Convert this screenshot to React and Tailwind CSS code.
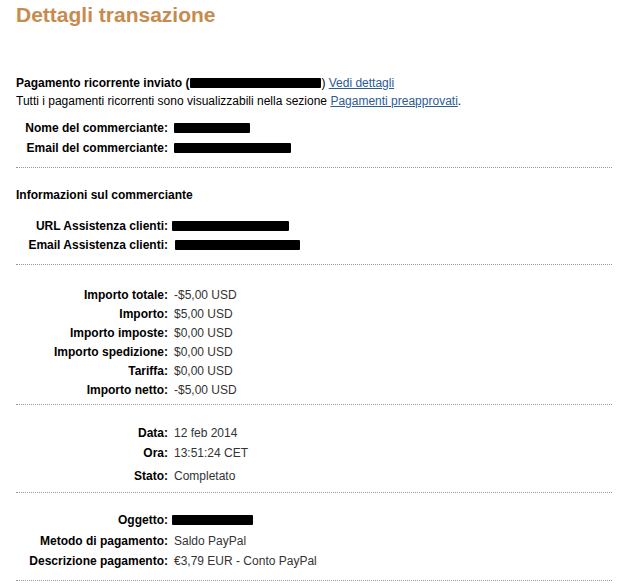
const rowsMerchant = [
  { label: 'Nome del commerciante:', bar: 76 },
  { label: 'Email del commerciante:', bar: 117 },
];

const rowsAmounts = [
  ['Importo totale:', '-$5,00 USD'],
  ['Importo:', '$5,00 USD'],
  ['Importo imposte:', '$0,00 USD'],
  ['Importo spedizione:', '$0,00 USD'],
  ['Tariffa:', '$0,00 USD'],
  ['Importo netto:', '-$5,00 USD'],
];

function Redacted({ w, className = '' }) {
  return <span className={`inline-block h-[10px] bg-black align-[-1px] rounded-[1px] ${className}`} style={{ width: w }} />;
}

function Row({ label, children, h = 'h-[19px]', className = '' }) {
  return (
    <div className={`flex items-center ${h} ${className}`}>
      <div className="w-[152px] shrink-0 text-right font-bold text-black">{label}</div>
      <div className="pl-[6px] text-[#333]">{children}</div>
    </div>
  );
}

function Divider() {
  return <div className="border-t border-dotted border-[#999]" />;
}

export default function App() {
  return (
    <div className="min-h-[588px] bg-white font-['Liberation_Sans',Arial,sans-serif] text-[12px] leading-[18px] text-black">
      <div className="w-[596px] ml-[16px]">
        <h1 className="pt-[2px] text-[21px] leading-[26px] font-bold text-[#c98a4e]">Dettagli transazione</h1>

        {/* Recurring payment notice */}
        <div className="mt-[46px]">
          <div className="h-[18px] flex items-center">
            <span className="font-bold">Pagamento ricorrente inviato (</span>
            <Redacted w={131} className="ml-[1px]" />
            <span>)&nbsp;</span>
            <a href="#" className="text-[#2b5c96] underline">Vedi dettagli</a>
          </div>
          <div className="h-[18px]">
            Tutti i pagamenti ricorrenti sono visualizzabili nella sezione{' '}
            <a href="#" className="text-[#2b5c96] underline">Pagamenti preapprovati</a>.
          </div>
        </div>

        <div className="mt-[8px] mb-[9px]">
          {rowsMerchant.map((r) => (
            <Row key={r.label} label={r.label} h="h-[20px]">
              <Redacted w={r.bar} />
            </Row>
          ))}
        </div>
        <Divider />

        {/* Merchant info */}
        <div className="mt-[18px] h-[18px] font-bold">Informazioni sul commerciante</div>
        <div className="mt-[12px] mb-[10px]">
          <Row label="URL Assistenza clienti:">
            <Redacted w={117} className="-ml-[2px]" />
          </Row>
          <Row label="Email Assistenza clienti:" className="pt-[1px]">
            <Redacted w={125} className="ml-[1px]" />
          </Row>
        </div>
        <Divider />

        {/* Amounts */}
        <div className="mt-[20px] mb-[5px]">
          {rowsAmounts.map(([l, v]) => (
            <Row key={l} label={l}>{v}</Row>
          ))}
        </div>
        <Divider />

        {/* Date and status */}
        <div className="mt-[18px] mb-[6px]">
          <Row label="Data:" h="h-[20px]">12 feb 2014</Row>
          <Row label="Ora:" h="h-[20px]">13:51:24 CET</Row>
          <Row label="Stato:" h="h-[20px]" className="mt-[3px]">Completato</Row>
        </div>
        <Divider />

        {/* Payment details */}
        <div className="mt-[17px] mb-[10px]">
          <Row label="Oggetto:" h="h-[20px]">
            <Redacted w={81} className="-ml-[2px]" />
          </Row>
          <Row label="Metodo di pagamento:" h="h-[20px]" className="pt-[1px]">Saldo PayPal</Row>
          <Row label="Descrizione pagamento:" h="h-[20px]" className="pt-[1px]">€3,79 EUR - Conto PayPal</Row>
        </div>
        <Divider />
      </div>
    </div>
  );
}
